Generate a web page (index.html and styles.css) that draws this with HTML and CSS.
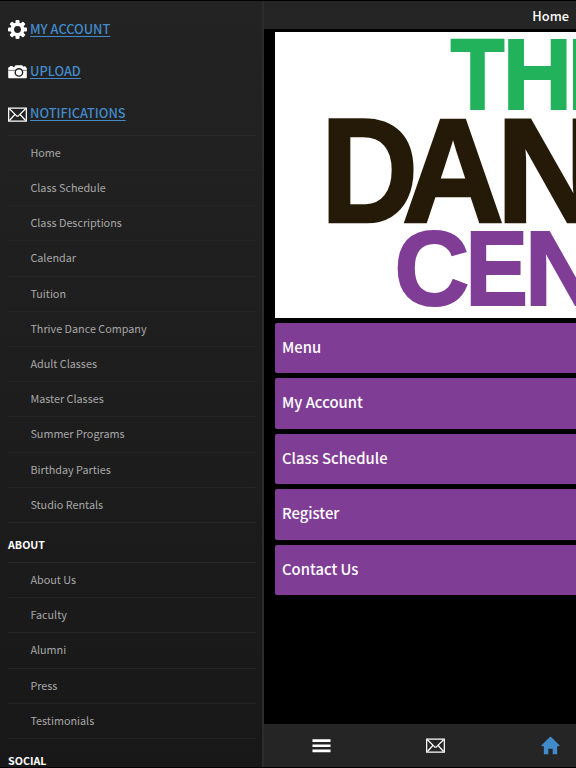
FILE: index.html
```html
<!DOCTYPE html>
<html lang="en">
  <head>
    <meta charset="UTF-8" />
    <title>Home</title>
    <link rel="stylesheet" href="styles.css">
  </head>

  <body>
    <div class="app">
      <nav class="drawer">
        <a class="action" href="#">
          <svg class="icon" viewBox="0 0 20 20">
            <g fill="#fff">
              <rect x="7.900" y="0" width="4.200" height="20" rx="1" />
              <rect x="7.900" y="0" width="4.200" height="20" rx="1" transform="rotate(45 10 10)" />
              <rect x="7.900" y="0" width="4.200" height="20" rx="1" transform="rotate(90 10 10)" />
              <rect x="7.900" y="0" width="4.200" height="20" rx="1" transform="rotate(135 10 10)" />
              <circle cx="10" cy="10" r="7.300" />
            </g>
            <circle cx="10" cy="10" r="3.600" fill="#222" />
          </svg>
          <span>MY ACCOUNT</span>
        </a>
        <a class="action" href="#">
          <svg class="icon camera" viewBox="0 0 20 20">
            <path fill="#fff" d="M1 5.2h1V4.2h3v1h1.5L8 3.5h7l1.300 1.500L18 4.200l1 1.500.8.700V16q0 1-1 1H1.200q-1 0-1-1V6.200z" />
            <path stroke="#555" stroke-width=".8" d="M.2 8.800h19.600" />
            <circle cx="11.500" cy="11" r="3.900" fill="#fff" stroke="#222" stroke-width="1.500" />
          </svg>
          <span>UPLOAD</span>
        </a>
        <a class="action" href="#">
          <svg class="icon mail" viewBox="0 0 20 20">
            <g fill="none" stroke="#fff" stroke-width="1.300">
              <path d="M.7 3.200h18.600v13.800H.7z" />
              <path d="M1.500 4l7.300 7.200q1.200.9 2.400 0L18.500 4M1.500 16.300l5.500-6M18.500 16.300l-5.500-6" />
            </g>
          </svg>
          <span>NOTIFICATIONS</span>
        </a>

        <ul class="links">
          <li>Home</li>
          <li>Class Schedule</li>
          <li>Class Descriptions</li>
          <li>Calendar</li>
          <li>Tuition</li>
          <li>Thrive Dance Company</li>
          <li>Adult Classes</li>
          <li>Master Classes</li>
          <li>Summer Programs</li>
          <li>Birthday Parties</li>
          <li>Studio Rentals</li>
        </ul>
        <h2>ABOUT</h2>
        <ul class="links">
          <li>About Us</li>
          <li>Faculty</li>
          <li>Alumni</li>
          <li>Press</li>
          <li>Testimonials</li>
        </ul>
        <h2>SOCIAL</h2>
      </nav>

      <main class="page">
        <header class="topbar">Home</header>
        <div class="content">
          <svg class="logo" viewBox="0 0 301 286">
            <g class="thrive">
              <text transform="translate(175.600 76.500) scale(.875 1)">T</text>
              <text transform="translate(227.800 76.500) scale(.95 1)">H</text>
              <text transform="translate(292.300 76.500)">R</text>
            </g>
            <g class="dance">
              <text transform="translate(45.700 190.300) scale(.91 1)">D</text>
              <text transform="translate(127.100 190.300) scale(.955 1)">A</text>
              <text transform="translate(221 190.300)">N</text>
            </g>
            <g class="center">
              <text transform="translate(119.400 272.700) scale(.985 1)">C</text>
              <text transform="translate(190.400 272.700) scale(.89 1)">E</text>
              <text transform="translate(249.800 272.700)">N</text>
            </g>
          </svg>
          <a class="button" href="#">Menu</a>
          <a class="button" href="#">My Account</a>
          <a class="button" href="#">Class Schedule</a>
          <a class="button" href="#">Register</a>
          <a class="button" href="#">Contact Us</a>
        </div>
        <footer class="tabbar">
          <svg class="icon" viewBox="0 0 20 20">
            <path fill="#fff" d="M.5 3.500h19v2.700H.5zM.5 8.900h19v2.700H.5zM.5 14.300h19V17H.5z" />
          </svg>
          <svg class="icon" viewBox="0 0 20 20">
            <g fill="none" stroke="#fff" stroke-width="1.300">
              <path d="M.7 3.200h18.600v13.800H.7z" />
              <path d="M1.500 4l7.300 7.200q1.200.9 2.400 0L18.500 4M1.500 16.300l5.500-6M18.500 16.300l-5.500-6" />
            </g>
          </svg>
          <svg class="icon" viewBox="0 0 20 20">
            <path fill="#428bca" d="M10 .8q.5 0 1 .6l8.400 8.400q.6 1-.4 1h-2v8.400h-4.700v-5.700H7.700v5.700H3v-8.400H1q-1 0-.4-1L9 1.400q.5-.6 1-.6z" />
          </svg>
        </footer>
      </main>
    </div>
  </body>
</html>
```

FILE: styles.css
```css
* {
  box-sizing: border-box;
}

body {
  margin: 0;
  background: #000;
  color: #fff;
  font-family: "Noto Sans CJK SC", "Noto Sans", sans-serif;
}

a {
  color: inherit;
  text-decoration: none;
}

.app {
  display: flex;
  height: 768px;
  padding: 1px 0;
  overflow: hidden;
}

.drawer {
  flex: 0 0 264px;
  padding: 7px 6px 0 8px;
  overflow: hidden;
  border-right: 2px solid #2c2c2c;
  background: linear-gradient(#232323, #181818);
}

.action {
  display: flex;
  align-items: center;
  gap: 3px;
  height: 42.3px;
  color: #428bca;
  font-size: 12.8px;
  font-weight: 500;
}

.action span {
  margin-top: -2px;
  text-decoration: underline;
  text-underline-offset: 2px;
}

.icon {
  display: block;
  width: 19px;
  height: 19px;
}

.camera {
  margin-top: 1px;
}

.mail {
  margin-top: 2px;
}

.links {
  margin: 0;
  padding: 0;
  list-style: none;
  border-top: 1px solid #292929;
}

.links li {
  height: 35.2px;
  padding-left: 22.4px;
  border-bottom: 1px solid #252525;
  color: #a7a7a7;
  font-size: 10.8px;
  line-height: 33px;
}

h2 {
  height: 39px;
  margin: 0;
  padding-top: 8px;
  font-size: 10.7px;
  font-weight: bold;
  line-height: 28px;
}

.page {
  display: flex;
  flex: 1;
  flex-direction: column;
  min-width: 0;
}

.topbar {
  height: 28px;
  padding-right: 7px;
  background: #252525;
  font-size: 12.8px;
  font-weight: 500;
  line-height: 30px;
  text-align: right;
}

.content {
  display: flex;
  flex: 1;
  flex-direction: column;
  gap: 5px;
  padding: 2.500px 0 0 11px;
}

.logo {
  display: block;
  flex: none;
  width: 301px;
  height: 286px;
  overflow: hidden;
  background: #fff;
  font-family: "Liberation Sans", Arial, sans-serif;
  font-weight: bold;
}

.thrive {
  fill: #21b25b;
  stroke: #21b25b;
  stroke-width: 2;
  font-size: 101px;
}

.dance {
  fill: #251a08;
  stroke: #251a08;
  stroke-width: 2.6;
  font-size: 148px;
}

.center {
  fill: #803d96;
  stroke: #803d96;
  stroke-width: 2.2;
  font-size: 105px;
}

.button {
  height: 50.5px;
  padding-left: 7px;
  border-radius: 2px 0 0 2px;
  background: #803d96;
  font-size: 14.8px;
  font-weight: 500;
  line-height: 48px;
}

.tabbar {
  display: flex;
  align-items: center;
  justify-content: space-between;
  height: 43px;
  padding: 0 16px 0 47.5px;
  background: #252525;
}
```
